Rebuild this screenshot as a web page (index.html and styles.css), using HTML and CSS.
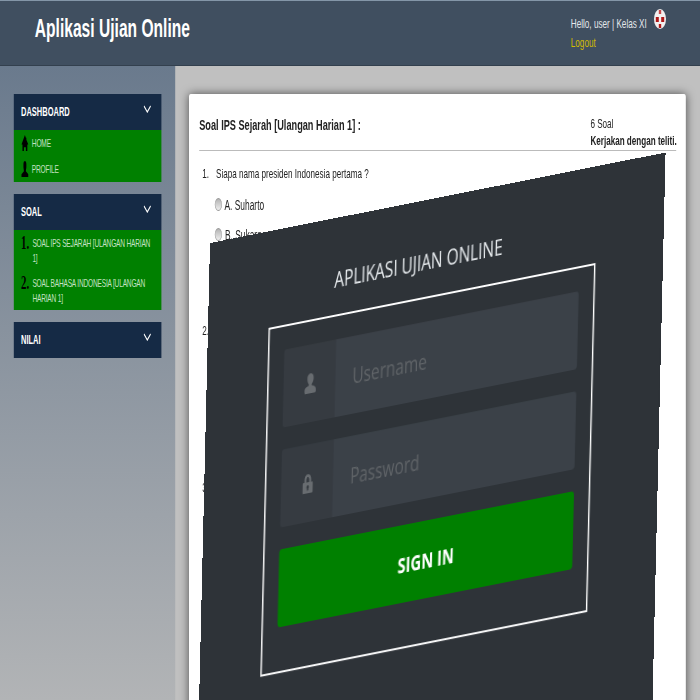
FILE: index.html
```html
<!DOCTYPE html>
<html>
  <head>
    <meta charset="UTF-8">
    <title>Aplikasi Ujian Online</title>
    <link rel="stylesheet" href="styles.css">
  </head>
  <body>
    <div class="page">
      <header class="topbar">
        <h1 class="brand">Aplikasi Ujian Online</h1>
        <div class="user-box">
          <div class="user-text">
            <div>Hello, user | Kelas XI</div>
            <a class="logout" href="#">Logout</a>
          </div>
          <svg class="avatar" width="20" height="20" viewBox="0 0 20 20">
            <circle cx="10" cy="10" r="10" fill="#f4f0f0"/>
            <rect x="3" y="8" width="5" height="5" fill="#b01818"/>
            <rect x="12" y="8" width="5" height="5" fill="#b01818"/>
            <rect x="8" y="1" width="4" height="4" fill="#c84848"/>
            <rect x="8" y="15" width="4" height="4" fill="#b01818"/>
          </svg>
        </div>
      </header>
      <div class="layout">
        <aside class="sidebar">
          <section class="menu">
            <div class="menu-head">
              <span>DASHBOARD</span>
              <svg class="chevron" width="13" height="8" viewBox="0 0 13 8"><path d="M1 1l5.500 6 5.500-6" fill="none" stroke="#fff" stroke-width="1.6"/></svg>
            </div>
            <ul class="menu-list">
              <li class="menu-item">
                <svg class="menu-icon" width="13" height="16" viewBox="0 0 16 17" preserveAspectRatio="none"><path d="M8 0l2 3h1v2l4 5h-2v7h-3v-4H6v4H3v-7H1l5-7z" fill="#000"/></svg>
                <a href="#">HOME</a>
              </li>
              <li class="menu-item">
                <svg class="menu-icon" width="13" height="16" viewBox="0 0 16 17" preserveAspectRatio="none"><path d="M8 0a3 3 0 0 1 3 3v3c0 2-1 3-1 5l5 3v3H1v-3l5-3c0-2-1-3-1-5V3a3 3 0 0 1 3-3z" fill="#000"/></svg>
                <a href="#">PROFILE</a>
              </li>
            </ul>
          </section>
          <section class="menu">
            <div class="menu-head">
              <span>SOAL</span>
              <svg class="chevron" width="13" height="8" viewBox="0 0 13 8"><path d="M1 1l5.500 6 5.500-6" fill="none" stroke="#fff" stroke-width="1.6"/></svg>
            </div>
            <ul class="menu-list">
              <li class="menu-item tall"><b class="num">1.</b><a href="#">SOAL IPS SEJARAH [ULANGAN HARIAN 1]</a></li>
              <li class="menu-item tall"><b class="num">2.</b><a href="#">SOAL BAHASA INDONESIA [ULANGAN HARIAN 1]</a></li>
            </ul>
          </section>
          <section class="menu">
            <div class="menu-head">
              <span>NILAI</span>
              <svg class="chevron" width="13" height="8" viewBox="0 0 13 8"><path d="M1 1l5.500 6 5.500-6" fill="none" stroke="#fff" stroke-width="1.6"/></svg>
            </div>
          </section>
        </aside>
        <main class="content">
          <div class="panel">
            <div class="panel-head">
              <h2 class="quiz-title">Soal IPS Sejarah [Ulangan Harian 1] :</h2>
              <div class="quiz-info">
                <div>6 Soal</div>
                <b>Kerjakan dengan teliti.</b>
              </div>
            </div>
            <div class="questions">
              <div class="question">
                <span class="q-num">1.</span>
                <div>
                  Siapa nama presiden Indonesia pertama ?
                  <label class="answer"><input type="radio" name="q1"> A. Suharto</label>
                  <label class="answer"><input type="radio" name="q1"> B. Sukarno</label>
                </div>
              </div>
              <div class="question"><span class="q-num">2.</span></div>
              <div class="question"><span class="q-num">3.</span></div>
            </div>
          </div>
        </main>
      </div>
    </div>

    <form class="login">
      <h2 class="login-title">APLIKASI UJIAN ONLINE</h2>
      <div class="login-frame">
        <div class="field">
          <span class="field-icon">
            <svg width="18" height="20" viewBox="0 0 24 26" preserveAspectRatio="none"><path d="M12 0c4 0 6 3 6 6.500S16 13 14.500 14v2c4 1 8 2 8 6v2c0 1-1 2-2 2H3c-1 0-2-1-2-2v-2c0-4 4-5 8-6v-2C7.500 13 6 10 6 6.500S8 0 12 0z" fill="#686C70"/></svg>
          </span>
          <input class="field-input" type="text" placeholder="Username">
        </div>
        <div class="field">
          <span class="field-icon">
            <svg width="15" height="19" viewBox="0 0 22 26" preserveAspectRatio="none"><path fill-rule="evenodd" d="M11 0c4 0 7 3 7 7v4h2c1 0 2 1 2 2v11c0 1-1 2-2 2H2c-1 0-2-1-2-2V13c0-1 1-2 2-2h2V7c0-4 3-7 7-7zm0 4C9 4 8 5.500 8 7v4h6V7c0-1.500-1-3-3-3zm0 11a2.500 2.500 0 0 0-1.500 4.500V22h3v-2.500A2.500 2.500 0 0 0 11 15z" fill="#686C70"/></svg>
          </span>
          <input class="field-input" type="password" placeholder="Password">
        </div>
        <button class="signin" type="button">SIGN IN</button>
      </div>
    </form>
  </body>
</html>
```

FILE: styles.css
```css
html, body {
  margin: 0;
  height: 700px;
  overflow: hidden;
}

body {
  position: relative;
  font-family: "Liberation Sans", Arial, sans-serif;
  font-size: 14px;
  color: #222222;
  background-color: #C0C0C0;
}

/* the whole page is a wider layout squeezed to the window width */
.page {
  width: 1167px;
  height: 700px;
  transform: scaleX(0.6);
  transform-origin: 0 0;
}

.topbar {
  display: flex;
  justify-content: space-between;
  box-sizing: border-box;
  height: 66px;
  padding: 0 57px 0 58px;
  background-color: #404F60;
  border-top: 1px solid #8496A8;
  border-bottom: 1px solid #33404E;
}

.brand {
  margin: 12px 0 0;
  font-size: 26px;
  line-height: 30px;
  color: #FFFFFF;
}

.user-box {
  display: flex;
  gap: 12px;
  padding-top: 8px;
}

.user-text {
  padding-top: 5px;
  font-size: 13.600px;
  line-height: 19px;
  color: #E4E8EC;
}

.logout {
  color: #D4BC00;
  text-decoration: none;
}

.layout {
  display: flex;
  height: 634px;
}

.sidebar {
  box-sizing: border-box;
  flex: none;
  width: 292px;
  padding: 28px 23px 0;
  background: linear-gradient(#6A7A8D, #B2B4B6);
}

.menu {
  margin-bottom: 12px;
}

.menu-head {
  display: flex;
  justify-content: space-between;
  align-items: center;
  box-sizing: border-box;
  height: 36px;
  padding: 0 17px 0 12px;
  font-size: 12.500px;
  font-weight: bold;
  color: #FFFFFF;
  background-color: #152A45;
}

.chevron {
  margin-bottom: 6px;
}

.menu-list {
  margin: 0;
  padding: 0;
  list-style: none;
  background-color: #008000;
}

.menu-item {
  display: flex;
  align-items: center;
  gap: 5px;
  height: 26px;
  padding: 0 17px 0 12px;
  font-size: 11px;
  letter-spacing: -0.3px;
}

.menu-item a {
  color: #C4E2C4;
  text-decoration: none;
}

.menu-item.tall {
  align-items: flex-start;
  gap: 5px;
  height: 40px;
  padding-top: 6px;
  box-sizing: border-box;
  line-height: 15px;
  letter-spacing: -0.35px;
}

.num {
  flex: none;
  width: 14px;
  font-family: "Liberation Serif", serif;
  font-size: 18px;
  letter-spacing: 0;
  color: #000000;
}

.content {
  flex: 1;
  padding: 28px 24px 0 23px;
}

.panel {
  box-sizing: border-box;
  height: 640px;
  padding: 0 16px 0 17px;
  background-color: #FFFFFF;
  border-radius: 3px;
  box-shadow: 0 0 12px rgba(0, 0, 0, 0.6);
}

.panel-head {
  display: flex;
  justify-content: space-between;
  align-items: flex-end;
  height: 56px;
  border-bottom: 1px solid #BBBBBB;
}

.quiz-title {
  margin: 0 0 16px;
  font-size: 15.300px;
}

.quiz-info {
  width: 143px;
  padding-bottom: 1px;
  font-size: 13.500px;
  line-height: 17px;
  white-space: nowrap;
}

.questions {
  margin-top: 14px;
  padding-left: 5px;
}

.question {
  display: flex;
  min-height: 157px;
  font-size: 13.500px;
  line-height: 18px;
}

.q-num {
  flex: none;
  width: 23px;
}

.answer {
  display: block;
  height: 18px;
  margin-top: 13px;
  font-size: 14px;
}

.answer + .answer {
  margin-top: 12px;
}

.answer input {
  appearance: none;
  box-sizing: border-box;
  width: 12px;
  height: 13px;
  margin: 0 1px 0 -2px;
  vertical-align: -1px;
  background: linear-gradient(#B4B4B4, #EEEEEE);
  border: 1px solid #999999;
  border-radius: 50%;
}

/* login card lying tilted over the page */
.login {
  position: absolute;
  left: 210px;
  top: 243px;
  box-sizing: border-box;
  width: 650px;
  height: 620px;
  padding-left: 87px;
  font-family: "Open Sans", sans-serif;
  background-color: #2E3338;
  transform: matrix(0.7, -0.139, -0.0238, 1, 0, 0);
  transform-origin: 0 0;
}

.login-title {
  box-sizing: border-box;
  width: 467px;
  height: 97px;
  margin: 0;
  padding: 45px 41px 0 0;
  font-size: 22px;
  font-weight: normal;
  line-height: 32px;
  text-align: center;
  color: #E8ECEF;
}

.login-frame {
  display: flex;
  flex-direction: column;
  gap: 22px;
  box-sizing: border-box;
  width: 467px;
  height: 349px;
  padding: 23px 21px 0;
  border: 2px solid #FFFFFF;
}

.field {
  display: flex;
  height: 78px;
  border-radius: 4px;
  overflow: hidden;
}

.field-icon {
  display: flex;
  justify-content: center;
  align-items: center;
  flex: none;
  box-sizing: border-box;
  width: 74px;
  padding-left: 3px;
  background-color: #363B41;
}

.field-input {
  flex: 1;
  min-width: 0;
  padding: 0 0 0 25px;
  font-family: inherit;
  font-size: 22px;
  background-color: #3B4148;
  border: none;
}

.field-input::placeholder {
  color: #606468;
}

.signin {
  height: 78px;
  padding: 2px 0 0;
  font-family: inherit;
  font-size: 21px;
  font-weight: bold;
  color: #FFFFFF;
  background-color: #008000;
  border: none;
  border-radius: 4px;
}
```
